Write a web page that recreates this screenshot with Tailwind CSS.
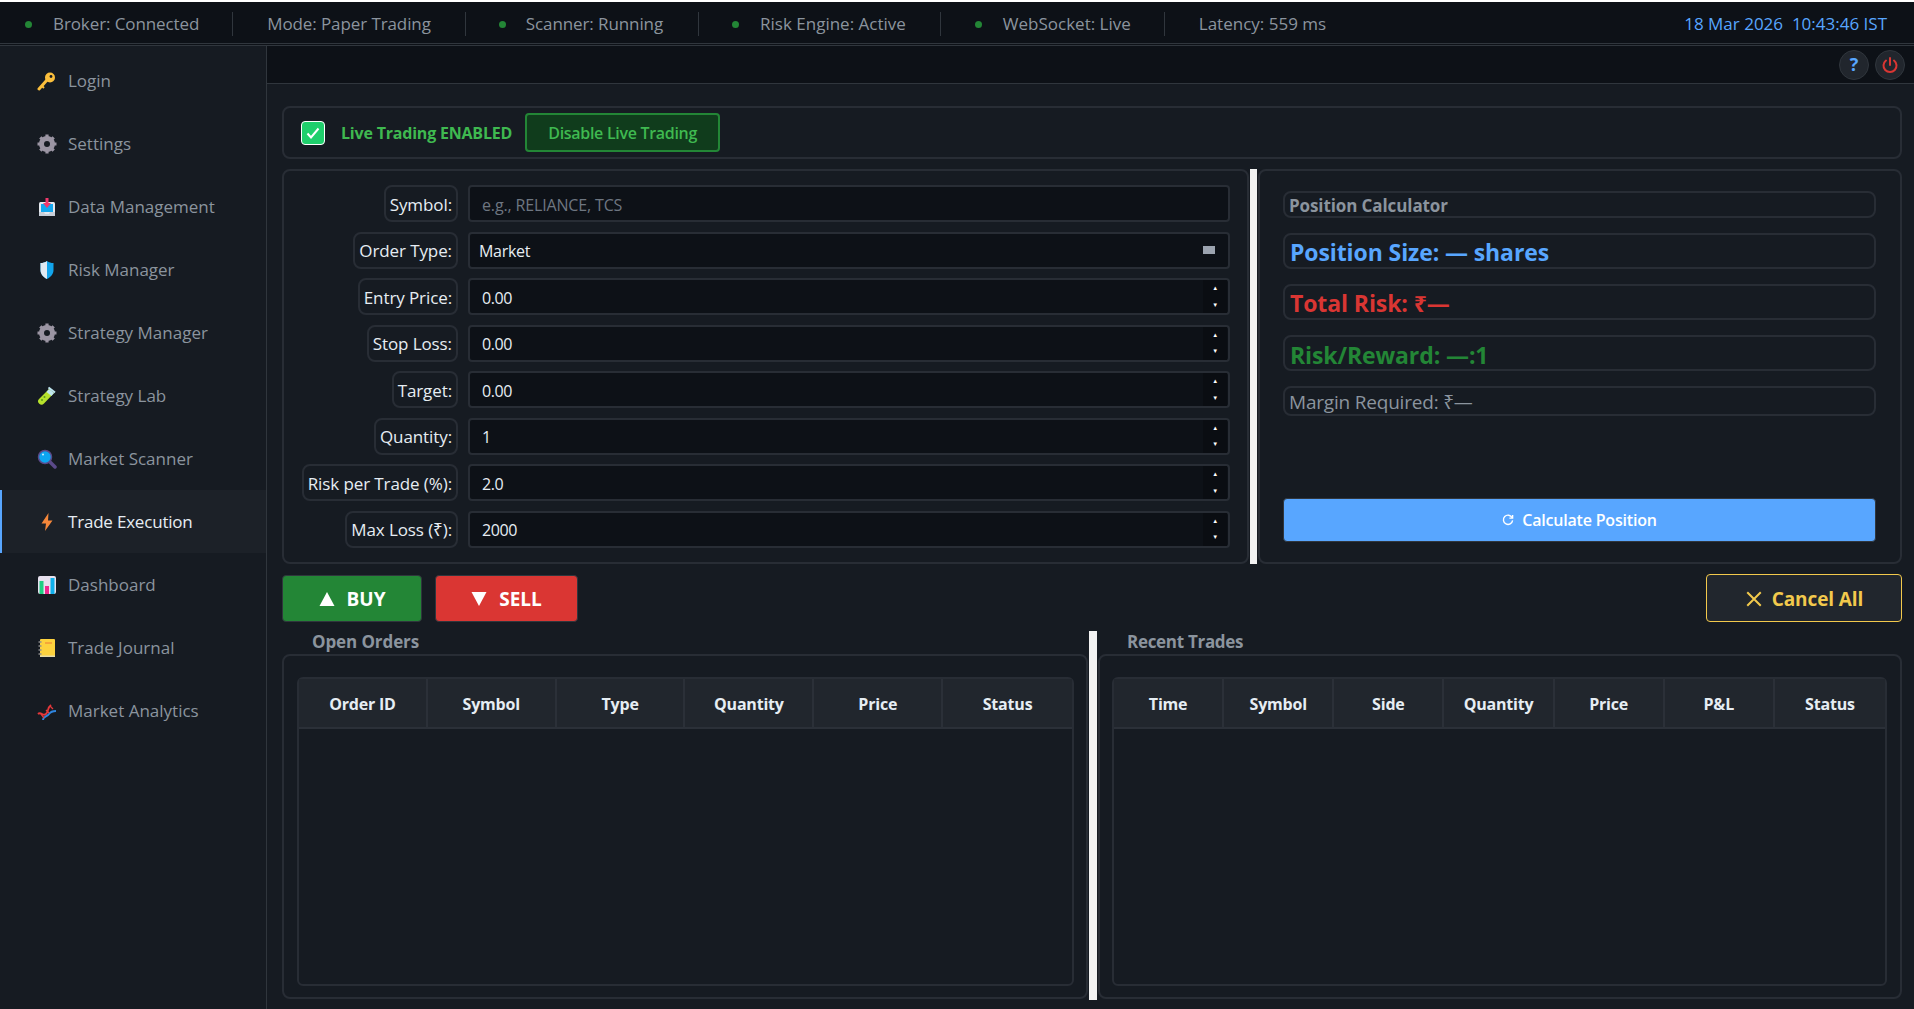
<!DOCTYPE html>
<html lang="en">

<head>
    <meta charset="UTF-8">
    <title>Trade Execution</title>
    <script src="https://cdn.jsdelivr.net/npm/@tailwindcss/browser@4"></script>
</head>

<body class="h-screen overflow-hidden bg-[#161b22] font-['Open_Sans','Noto_Sans',sans-serif] text-[#e6edf3]">
    <!-- Status Bar -->
    <div class="h-[46px] border-t-2 border-b border-t-white border-b-[#30363d] bg-[#0d1117]">
        <div class="flex h-[42px] items-center border-b border-[#30363d] pt-[3px] text-[17px] text-[#8b949e]">
            <div class="flex items-center pl-[25px] pr-[33px] border-r border-[#30363d] h-[24px] tracking-[-0.1px]">
                <span class="w-[7px] h-[7px] rounded-full bg-[#238636] mr-[21px]"></span>Broker: Connected
            </div>
            <div class="flex items-center pl-[34px] pr-[34px] border-r border-[#30363d] h-[24px] tracking-[-0.1px]">Mode: Paper Trading</div>
            <div class="flex items-center pl-[33px] pr-[35px] border-r border-[#30363d] h-[24px] tracking-[-0.1px]">
                <span class="w-[7px] h-[7px] rounded-full bg-[#238636] mr-[20px]"></span>Scanner: Running
            </div>
            <div class="flex items-center pl-[33px] pr-[34px] border-r border-[#30363d] h-[24px]">
                <span class="w-[7px] h-[7px] rounded-full bg-[#238636] mr-[21px]"></span>Risk Engine: Active
            </div>
            <div class="flex items-center pl-[34px] pr-[33px] border-r border-[#30363d] h-[24px]">
                <span class="w-[7px] h-[7px] rounded-full bg-[#238636] mr-[21px]"></span>WebSocket: Live
            </div>
            <div class="pl-[34px]">Latency: 559 ms</div>
            <div class="ml-auto pr-[27px] text-[#58a6ff]">18 Mar 2026&nbsp; 10:43:46 IST</div>
        </div>
    </div>

    <div class="flex h-[963px]">
        <!-- Sidebar -->
        <nav class="w-[267px] shrink-0 border-r border-[#30363d] bg-[#161b22] pt-[3px] text-[17px] text-[#8b949e]">
            <a class="flex h-[63px] items-center border-l-2 border-transparent pl-[35px]">
                <svg class="w-5 h-5 mr-[11px]" viewBox="0 0 20 20"><path d="M2 18 L10 9" stroke="#fbbf3c" stroke-width="3" stroke-linecap="round"/><path d="M5 15 L7 17" stroke="#fbbf3c" stroke-width="2"/><circle cx="13" cy="6.5" r="5" fill="#fbbf3c"/><circle cx="14" cy="5.5" r="1.4" fill="#161b22"/></svg>
                Login
            </a>
            <a class="flex h-[63px] items-center border-l-2 border-transparent pl-[35px]">
                <svg class="w-5 h-5 mr-[11px]" viewBox="0 0 20 20"><circle cx="10" cy="10" r="6" fill="none" stroke="#9b95a3" stroke-width="4"/><path d="M10 .5v19M.5 10h19M3.300 3.300l13.400 13.400M16.700 3.300L3.300 16.700" stroke="#9b95a3" stroke-width="3.200"/><circle cx="10" cy="10" r="3" fill="#161b22"/></svg>
                Settings
            </a>
            <a class="flex h-[63px] items-center border-l-2 border-transparent pl-[35px]">
                <svg class="w-5 h-5 mr-[11px]" viewBox="0 0 20 20"><rect x="2" y="5" width="16" height="14" rx="1.5" fill="#e4e8ee"/><rect x="4" y="7" width="12" height="8" fill="#14a7ee"/><path d="M2 15h5l1 2h4l1-2h5v4H2z" fill="#c7ced8"/><path d="M8.500 1h3v5h2.500L10 11 6 6h2.500z" fill="#f0386b"/></svg>
                Data Management
            </a>
            <a class="flex h-[63px] items-center border-l-2 border-transparent pl-[35px]">
                <svg class="w-5 h-5 mr-[11px]" viewBox="0 0 20 20"><path d="M10 1c2 1.500 4 2 6.500 2v7c0 4-2.500 7-6.500 9-4-2-6.500-5-6.500-9V3C6 3 8 2.500 10 1z" fill="#12a5ec"/><path d="M10 1C8 2.500 6 3 3.500 3v7c0 4 2.500 7 6.500 9z" fill="#dfeaf3"/></svg>
                Risk Manager
            </a>
            <a class="flex h-[63px] items-center border-l-2 border-transparent pl-[35px]">
                <svg class="w-5 h-5 mr-[11px]" viewBox="0 0 20 20"><circle cx="10" cy="10" r="6" fill="none" stroke="#9b95a3" stroke-width="4"/><path d="M10 .5v19M.5 10h19M3.300 3.300l13.400 13.400M16.700 3.300L3.300 16.700" stroke="#9b95a3" stroke-width="3.200"/><circle cx="10" cy="10" r="3" fill="#161b22"/></svg>
                Strategy Manager
            </a>
            <a class="flex h-[63px] items-center border-l-2 border-transparent pl-[35px]">
                <svg class="w-5 h-5 mr-[11px]" viewBox="0 0 20 20"><path d="M12 3l5 4-10 10.500a3.200 3.200 0 0 1-5-4.500z" fill="#b7e22c"/><path d="M12 3l5 4-2.500 3-5-4z" fill="#bfe6f0"/><path d="M11.500 1.500l6.500 5" stroke="#bfe6f0" stroke-width="2"/><circle cx="7.500" cy="11" r="1" fill="#5c9a1c"/><circle cx="5" cy="14" r="1" fill="#5c9a1c"/></svg>
                Strategy Lab
            </a>
            <a class="flex h-[63px] items-center border-l-2 border-transparent pl-[35px]">
                <svg class="w-5 h-5 mr-[11px]" viewBox="0 0 20 20"><path d="M12 12l6 6" stroke="#5b4a8a" stroke-width="3.500" stroke-linecap="round"/><circle cx="8" cy="8" r="6.500" fill="#0da6f0" stroke="#5b4a8a" stroke-width="1.500"/><circle cx="6" cy="5.500" r="1" fill="#cdefff"/></svg>
                Market Scanner
            </a>
            <a class="flex h-[63px] items-center border-l-2 border-[#58a6ff] bg-[#1c2128] pl-[35px] tracking-[-0.2px] text-[#e6edf3]">
                <svg class="w-5 h-5 mr-[11px]" viewBox="0 0 20 20"><path d="M11.500 1L4.500 11.500H9L8 19l7.500-10.500H11z" fill="#f5873a"/></svg>
                Trade Execution
            </a>
            <a class="flex h-[63px] items-center border-l-2 border-transparent pl-[35px]">
                <svg class="w-5 h-5 mr-[11px]" viewBox="0 0 20 20"><rect x="1" y="1" width="18" height="18" rx="2" fill="#e7e1ee"/><rect x="2.500" y="6" width="4" height="13" fill="#1fcf83"/><rect x="8" y="11" width="4" height="8" fill="#f0288f"/><rect x="13.500" y="3" width="4" height="16" fill="#0fb0ec"/></svg>
                Dashboard
            </a>
            <a class="flex h-[63px] items-center border-l-2 border-transparent pl-[35px]">
                <svg class="w-5 h-5 mr-[11px]" viewBox="0 0 20 20"><rect x="3" y="1" width="15" height="18" rx="1" fill="#fdd23e"/><rect x="8" y="4" width="7" height="2" fill="#f5a63a"/><rect x="3" y="17.500" width="15" height="1.500" fill="#e8dca8"/><path d="M1.500 4h3M1.500 8h3M1.500 12h3M1.500 16h3" stroke="#8d8d8d" stroke-width="1.500"/></svg>
                Trade Journal
            </a>
            <a class="flex h-[63px] items-center border-l-2 border-transparent pl-[35px]">
                <svg class="w-5 h-5 mr-[11px]" viewBox="0 0 20 20" fill="none" stroke-width="1.800"><path d="M1 13c3-3 5 3 8 0s1-6 5-9" stroke="#e5383b"/><path d="M6 19c0-4 4-3 6-6s4-3 7-3" stroke="#2f86e0"/><path d="M4 13l3 4M9 9l3 3M13 5l3 3" stroke="#e5383b" stroke-width="1.300"/></svg>
                Market Analytics
            </a>
        </nav>

        <main class="flex-1 flex flex-col min-w-0">
            <!-- Header buttons -->
            <div class="flex h-[38px] shrink-0 items-center justify-end gap-[6px] border-b border-[#30363d] bg-[#0d1117] pr-[9px]">
                <button class="flex w-[30px] h-[30px] items-center justify-center rounded-full border border-[#30363d] bg-[#21262d] text-[18px] font-bold text-[#58a6ff]">?</button>
                <button class="flex w-[30px] h-[30px] items-center justify-center rounded-full border border-[#30363d] bg-[#21262d]">
                    <svg class="w-[18px] h-[18px]" viewBox="0 0 18 18" fill="none" stroke="#da3633" stroke-width="2" stroke-linecap="round"><path d="M9 2v7"/><path d="M5 4.500a6.500 6.500 0 1 0 8 0"/></svg>
                </button>
            </div>

            <div class="flex-1 flex flex-col pt-[22px] pl-[15px] pr-[12px] min-h-0">
                <!-- Live Trading toggle -->
                <div class="flex h-[53px] shrink-0 items-center rounded-[8px] border-2 border-[#282d35] pl-[17px]">
                    <span class="flex w-[24px] h-[24px] items-center justify-center rounded-[4px] border border-white bg-[#1fcf6c]">
                        <svg class="w-4 h-4" viewBox="0 0 16 16" fill="none" stroke="white" stroke-width="2"><path d="M2.500 8.500l3.500 4 7.500-9"/></svg>
                    </span>
                    <span class="ml-[16px] text-[16px] font-bold tracking-[-0.2px] text-[#3fb950]">Live Trading ENABLED</span>
                    <button class="ml-[13px] h-[39px] w-[195px] rounded-[4px] border-2 border-[#238636] bg-[#103c1c] text-[16px] font-semibold tracking-[-0.3px] text-[#3fb950]">Disable Live Trading</button>
                </div>

                <!-- Order form + Position calculator -->
                <div class="mt-[10px] flex h-[395px] shrink-0">
                    <div class="flex flex-1 flex-col gap-[9.500px] rounded-[8px] border-2 border-[#282d35] pt-[14px] pr-[17px]">
                        <div class="flex h-[37px] justify-end">
                            <label class="flex items-center rounded-[8px] border-2 border-[#282d35] px-[4px] pt-[2px] text-[17px] tracking-[-0.1px]">Symbol:</label>
                            <div class="ml-[10px] flex w-[762px] items-center rounded-[4px] border-2 border-[#282d35] bg-[#0d1117] pl-[12px] pt-[2px] text-[16px] tracking-[-0.15px] text-[#6e7681]">e.g., RELIANCE, TCS</div>
                        </div>
                        <div class="flex h-[37px] justify-end">
                            <label class="flex items-center rounded-[8px] border-2 border-[#282d35] px-[4px] pt-[2px] text-[17px] tracking-[-0.1px]">Order Type:</label>
                            <div class="ml-[10px] flex w-[762px] items-center justify-between rounded-[4px] border-2 border-[#282d35] bg-[#0d1117] pl-[9px] pr-[13px] text-[16px] tracking-[-0.3px]"><span class="pt-[2px]">Market</span><span class="w-[12px] h-[8px] bg-[#9ba3af]"></span></div>
                        </div>
                        <div class="flex h-[37px] justify-end">
                            <label class="flex items-center rounded-[8px] border-2 border-[#282d35] px-[4px] pt-[2px] text-[17px] tracking-[-0.1px]">Entry Price:</label>
                            <div class="ml-[10px] flex w-[762px] items-center justify-between rounded-[4px] border-2 border-[#282d35] bg-[#0d1117] pl-[12px] text-[16px] tracking-[-0.4px]"><span class="pt-[2px]">0.00</span>
                                <div class="mr-[1px] flex h-full w-[24px] flex-col bg-[#0a0d12] text-[6px] leading-none text-white"><span class="flex flex-1 items-center justify-center">▲</span><span class="flex flex-1 items-center justify-center">▼</span></div>
                            </div>
                        </div>
                        <div class="flex h-[37px] justify-end">
                            <label class="flex items-center rounded-[8px] border-2 border-[#282d35] px-[4px] pt-[2px] text-[17px] tracking-[-0.1px]">Stop Loss:</label>
                            <div class="ml-[10px] flex w-[762px] items-center justify-between rounded-[4px] border-2 border-[#282d35] bg-[#0d1117] pl-[12px] text-[16px] tracking-[-0.4px]"><span class="pt-[2px]">0.00</span>
                                <div class="mr-[1px] flex h-full w-[24px] flex-col bg-[#0a0d12] text-[6px] leading-none text-white"><span class="flex flex-1 items-center justify-center">▲</span><span class="flex flex-1 items-center justify-center">▼</span></div>
                            </div>
                        </div>
                        <div class="flex h-[37px] justify-end">
                            <label class="flex items-center rounded-[8px] border-2 border-[#282d35] px-[4px] pt-[2px] text-[17px] tracking-[-0.1px]">Target:</label>
                            <div class="ml-[10px] flex w-[762px] items-center justify-between rounded-[4px] border-2 border-[#282d35] bg-[#0d1117] pl-[12px] text-[16px] tracking-[-0.4px]"><span class="pt-[2px]">0.00</span>
                                <div class="mr-[1px] flex h-full w-[24px] flex-col bg-[#0a0d12] text-[6px] leading-none text-white"><span class="flex flex-1 items-center justify-center">▲</span><span class="flex flex-1 items-center justify-center">▼</span></div>
                            </div>
                        </div>
                        <div class="flex h-[37px] justify-end">
                            <label class="flex items-center rounded-[8px] border-2 border-[#282d35] px-[4px] pt-[2px] text-[17px] tracking-[-0.1px]">Quantity:</label>
                            <div class="ml-[10px] flex w-[762px] items-center justify-between rounded-[4px] border-2 border-[#282d35] bg-[#0d1117] pl-[12px] text-[16px] tracking-[-0.4px]"><span class="pt-[2px]">1</span>
                                <div class="mr-[1px] flex h-full w-[24px] flex-col bg-[#0a0d12] text-[6px] leading-none text-white"><span class="flex flex-1 items-center justify-center">▲</span><span class="flex flex-1 items-center justify-center">▼</span></div>
                            </div>
                        </div>
                        <div class="flex h-[37px] justify-end">
                            <label class="flex items-center rounded-[8px] border-2 border-[#282d35] px-[4px] pt-[2px] text-[17px] tracking-[-0.1px]">Risk per Trade (%):</label>
                            <div class="ml-[10px] flex w-[762px] items-center justify-between rounded-[4px] border-2 border-[#282d35] bg-[#0d1117] pl-[12px] text-[16px] tracking-[-0.4px]"><span class="pt-[2px]">2.0</span>
                                <div class="mr-[1px] flex h-full w-[24px] flex-col bg-[#0a0d12] text-[6px] leading-none text-white"><span class="flex flex-1 items-center justify-center">▲</span><span class="flex flex-1 items-center justify-center">▼</span></div>
                            </div>
                        </div>
                        <div class="flex h-[37px] justify-end">
                            <label class="flex items-center rounded-[8px] border-2 border-[#282d35] px-[4px] pt-[2px] text-[17px] tracking-[-0.1px]">Max Loss (₹):</label>
                            <div class="ml-[10px] flex w-[762px] items-center justify-between rounded-[4px] border-2 border-[#282d35] bg-[#0d1117] pl-[12px] text-[16px] tracking-[-0.4px]"><span class="pt-[2px]">2000</span>
                                <div class="mr-[1px] flex h-full w-[24px] flex-col bg-[#0a0d12] text-[6px] leading-none text-white"><span class="flex flex-1 items-center justify-center">▲</span><span class="flex flex-1 items-center justify-center">▼</span></div>
                            </div>
                        </div>
                    </div>

                    <div class="mx-px w-[7px] shrink-0 bg-[#f2f2f2]"></div>

                    <div class="flex w-[644px] shrink-0 flex-col rounded-[8px] border-2 border-[#282d35] py-[20px] pl-[23px] pr-[24px]">
                        <div class="flex h-[27px] items-center rounded-[8px] border-2 border-[#282d35] px-[4px] pt-[3px] text-[17px] font-bold tracking-[-0.1px] text-[#8b949e]">Position Calculator</div>
                        <div class="mt-[15px] flex h-[36px] items-center rounded-[8px] border-2 border-[#282d35] px-[5px] pt-[3px] text-[23px] font-bold tracking-[-0.1px] text-[#58a6ff]">Position Size: — shares</div>
                        <div class="mt-[15px] flex h-[36px] items-center rounded-[8px] border-2 border-[#282d35] px-[5px] pt-[3px] text-[23px] font-bold tracking-[-0.1px] text-[#da3633]">Total Risk: ₹—</div>
                        <div class="mt-[15px] flex h-[36px] items-center rounded-[8px] border-2 border-[#282d35] px-[5px] pt-[4px] text-[23px] font-bold tracking-[-0.1px] text-[#238636]">Risk/Reward: —:1</div>
                        <div class="mt-[15px] flex h-[30px] items-center rounded-[8px] border-2 border-[#282d35] px-[4px] pt-[3px] text-[19px] tracking-[-0.2px] text-[#8b949e]">Margin Required: ₹—</div>
                        <button class="mt-auto flex h-[44px] items-center justify-center gap-[8px] rounded-[4px] border border-[#30363d] bg-[#58a6ff] text-[16px] font-semibold tracking-[-0.2px] text-white">
                            <svg class="w-[12px] h-[12px]" viewBox="0 0 13 13" fill="none" stroke="white" stroke-width="1.500"><path d="M11 4a5 5 0 1 0 .5 3"/><path d="M11.500 1v3.500H8"/></svg>
                            Calculate Position
                        </button>
                    </div>
                </div>

                <!-- Buy / Sell / Cancel -->
                <div class="mt-[10px] flex h-[48px] shrink-0 items-center">
                    <button class="flex h-[47px] w-[140px] items-center justify-center gap-[12px] rounded-[4px] border border-[#30363d] bg-[#238636] pt-[2px] text-[19px] font-bold text-white">
                        <svg class="w-4 h-4" viewBox="0 0 16 16" fill="white"><path d="M8 1l7.500 14H.5z"/></svg>BUY
                    </button>
                    <button class="ml-[13px] flex h-[47px] w-[143px] items-center justify-center gap-[12px] rounded-[4px] border border-[#30363d] bg-[#da3633] pt-[2px] text-[19px] font-bold text-white">
                        <svg class="w-4 h-4" viewBox="0 0 16 16" fill="white"><path d="M8 15L.5 1h15z"/></svg>SELL
                    </button>
                    <button class="ml-auto flex h-[48px] w-[196px] items-center justify-center gap-[9px] rounded-[4px] border border-[#f2c94c] bg-[#21262d] pt-[2px] text-[19px] font-bold tracking-[-0.1px] text-[#f2c94c]">
                        <svg class="w-[18px] h-[18px]" viewBox="0 0 16 16" fill="none" stroke="#f2c94c" stroke-width="1.800"><path d="M2 2l12 12M14 2L2 14"/></svg>Cancel All
                    </button>
                </div>

                <!-- Tables -->
                <div class="mt-[9px] flex h-[369px] shrink-0">
                    <div class="flex w-[806px] shrink-0 flex-col">
                        <div class="flex h-[23px] items-center pb-[2px] pl-[30px] text-[17px] font-bold tracking-[-0.1px] text-[#8b949e]">Open Orders</div>
                        <div class="mb-px flex-1 rounded-[8px] border-2 border-[#282d35] pt-[21px] pr-[12px] pb-[11px] pl-[13px]">
                            <table class="h-full w-full table-fixed border-separate border-spacing-0 rounded-[6px] border-2 border-[#282d35]">
                                <thead>
                                    <tr class="h-[50px] bg-[#21262d] text-[16px] font-bold tracking-[-0.2px]">
                                        <th class="border-b-2 border-r-2 border-[#2b3038] pt-px">Order ID</th>
                                        <th class="border-b-2 border-r-2 border-[#2b3038] pt-px">Symbol</th>
                                        <th class="border-b-2 border-r-2 border-[#2b3038] pt-px">Type</th>
                                        <th class="border-b-2 border-r-2 border-[#2b3038] pt-px">Quantity</th>
                                        <th class="border-b-2 border-r-2 border-[#2b3038] pt-px">Price</th>
                                        <th class="border-b-2 border-[#2b3038] pt-px">Status</th>
                                    </tr>
                                </thead>
                                <tbody>
                                    <tr><td colspan="6"></td></tr>
                                </tbody>
                            </table>
                        </div>
                    </div>

                    <div class="mx-px w-[8px] shrink-0 bg-[#f2f2f2]"></div>

                    <div class="flex flex-1 flex-col">
                        <div class="flex h-[23px] items-center pb-[2px] pl-[29px] text-[17px] font-bold tracking-[-0.3px] text-[#8b949e]">Recent Trades</div>
                        <div class="mb-px flex-1 rounded-[8px] border-2 border-[#282d35] pt-[21px] pr-[13px] pb-[11px] pl-[12px]">
                            <table class="h-full w-full table-fixed border-separate border-spacing-0 rounded-[6px] border-2 border-[#282d35]">
                                <thead>
                                    <tr class="h-[50px] bg-[#21262d] text-[16px] font-bold tracking-[-0.2px]">
                                        <th class="border-b-2 border-r-2 border-[#2b3038] pt-px">Time</th>
                                        <th class="border-b-2 border-r-2 border-[#2b3038] pt-px">Symbol</th>
                                        <th class="border-b-2 border-r-2 border-[#2b3038] pt-px">Side</th>
                                        <th class="border-b-2 border-r-2 border-[#2b3038] pt-px">Quantity</th>
                                        <th class="border-b-2 border-r-2 border-[#2b3038] pt-px">Price</th>
                                        <th class="border-b-2 border-r-2 border-[#2b3038] pt-px">P&amp;L</th>
                                        <th class="border-b-2 border-[#2b3038] pt-px">Status</th>
                                    </tr>
                                </thead>
                                <tbody>
                                    <tr><td colspan="7"></td></tr>
                                </tbody>
                            </table>
                        </div>
                    </div>
                </div>
            </div>
        </main>
    </div>
</body>

</html>
